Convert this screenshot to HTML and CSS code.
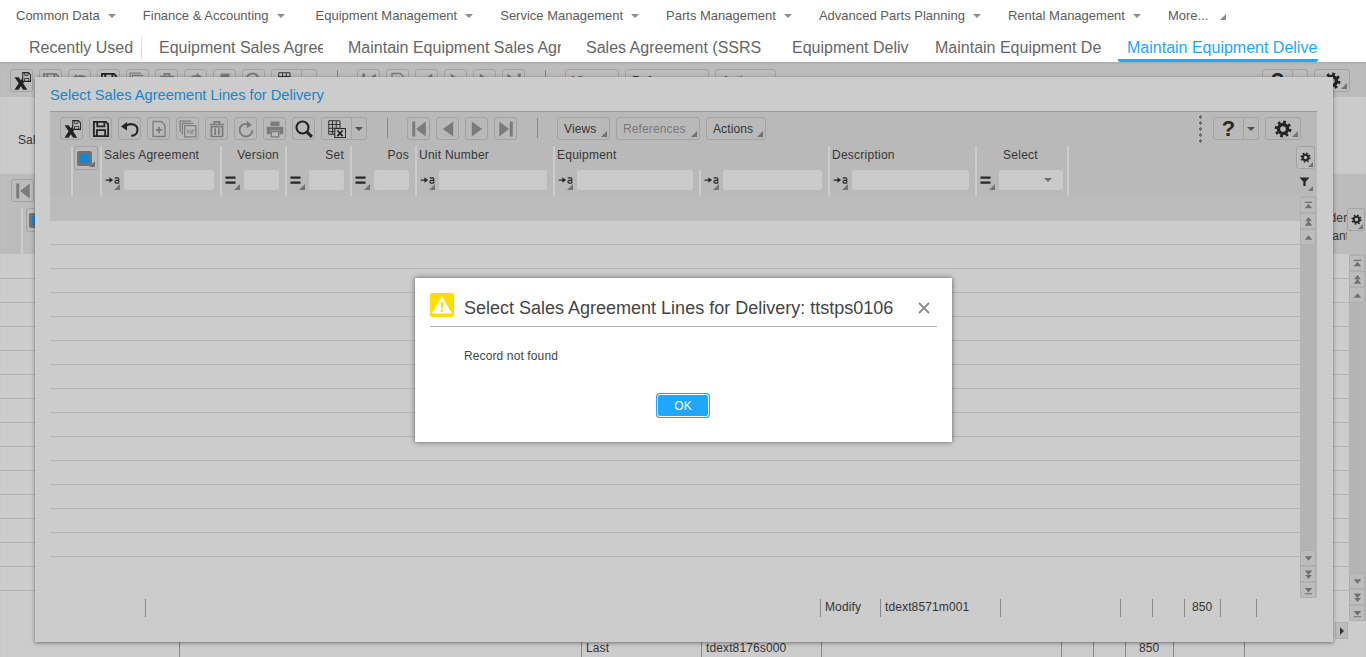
FILE: index.html
```html
<!DOCTYPE html>
<html lang="en">
<head>
    <meta charset="UTF-8">
    <meta name="viewport" content="width=device-width, initial-scale=1.0">
    <title>Maintain Equipment Delivery</title>
    <link rel="stylesheet" href="styles.css">
</head>
<body>
    <!-- Icon set -->
    <svg class="icon-defs" xmlns="http://www.w3.org/2000/svg">
        <symbol id="i-close" viewBox="0 0 24 24">
            <path d="M2 7h5.500l3 4 3-4H19l-5.500 8 5.500 8.500h-5.500l-3-4.500-3 4.500H2l5.500-8.500z" fill="currentColor"/>
            <path d="M13 .800h7.500l3 3V12.500H13z" fill="#ebebeb" stroke="currentColor" stroke-width="1.400"/>
            <path d="M15.500 1v3.500h4.500V1M15.500 12.500V8.500h5.500v4" fill="none" stroke="currentColor" stroke-width="1.100"/>
        </symbol>
        <symbol id="i-save" viewBox="0 0 24 24">
            <path d="M2.500 2.500h16l3 3v16h-19z" fill="none" stroke="currentColor" stroke-width="2.400"/>
            <path d="M7 2.500v6h9.500v-6M6.500 21.500v-8h11v8" fill="none" stroke="currentColor" stroke-width="2.400"/>
        </symbol>
        <symbol id="i-undo" viewBox="0 0 24 24">
            <path d="M7 7.500c6-4 15-1.500 15 5.500 0 5-4 8-8.500 8" fill="none" stroke="currentColor" stroke-width="2.800"/>
            <path d="M0 8.500l8-6v11.500z" fill="currentColor"/>
        </symbol>
        <symbol id="i-new" viewBox="0 0 24 24">
            <path d="M4 2h11l5 5v15H4z" fill="none" stroke="currentColor" stroke-width="1.800"/>
            <path d="M12 9v8.500M7.800 13.200h8.500" fill="none" stroke="currentColor" stroke-width="2.400"/>
        </symbol>
        <symbol id="i-copy" viewBox="0 0 24 24">
            <path d="M1.500 16V1.500H16" fill="none" stroke="currentColor" stroke-width="1.600"/>
            <path d="M4.500 19V4.500H19" fill="none" stroke="currentColor" stroke-width="1.600"/>
            <rect x="7.500" y="7.500" width="15" height="15" fill="none" stroke="currentColor" stroke-width="1.600"/>
            <path d="M10.500 13l3.500 5M14 13l-3.500 5M15.500 13.500h3.500v2h-3.500v2.500h4" fill="none" stroke="currentColor" stroke-width="1"/>
        </symbol>
        <symbol id="i-trash" viewBox="0 0 24 24">
            <path d="M2.500 6h19M8.500 6V2.500h7V6" fill="none" stroke="currentColor" stroke-width="2.200"/>
            <path d="M4.500 9h15v13h-15z" fill="none" stroke="currentColor" stroke-width="2.200"/>
            <path d="M9.500 11v9M14.500 11v9" fill="none" stroke="currentColor" stroke-width="2.200"/>
        </symbol>
        <symbol id="i-redo" viewBox="0 0 24 24">
            <path d="M16.500 6.500C11 3 3.500 7 3.500 13c0 5 4 9 8.500 9s8.500-4 8.500-8.500" fill="none" stroke="currentColor" stroke-width="2.400"/>
            <path d="M13 1l7 5.500-7 4.500z" fill="currentColor"/>
        </symbol>
        <symbol id="i-print" viewBox="0 0 24 24">
            <path d="M6 2h12v6H6z" fill="currentColor"/>
            <path d="M1 9h22v10h-5v-5H6v5H1z" fill="currentColor"/>
            <path d="M7 15.500h10V22.500H7z" fill="none" stroke="currentColor" stroke-width="1.800"/>
        </symbol>
        <symbol id="i-search" viewBox="0 0 24 24">
            <circle cx="10" cy="10" r="8" fill="none" stroke="currentColor" stroke-width="2.800"/>
            <path d="M15.500 15.500l7 7" fill="none" stroke="currentColor" stroke-width="3.800"/>
        </symbol>
        <symbol id="i-grid" viewBox="0 0 24 24">
            <path d="M1 1h15v18H1zM1 6h15M1 11h15M1 15.500h15M6 1v18M11 1v18" fill="none" stroke="currentColor" stroke-width="1.200"/>
            <rect x="9" y="11.500" width="14.500" height="12" fill="#ebebeb" stroke="currentColor" stroke-width="1.400"/>
            <path d="M12.500 14l7 7.500M19.500 14l-7 7.500" fill="none" stroke="currentColor" stroke-width="2.400"/>
        </symbol>
        <symbol id="i-first" viewBox="0 0 24 24"><path d="M3 2h4v20H3zM21 2v20L8 12z" fill="currentColor"/></symbol>
        <symbol id="i-prev" viewBox="0 0 24 24"><path d="M19 2v20L5 12z" fill="currentColor"/></symbol>
        <symbol id="i-next" viewBox="0 0 24 24"><path d="M5 2v20l14-10z" fill="currentColor"/></symbol>
        <symbol id="i-last" viewBox="0 0 24 24"><path d="M17 2h4v20h-4zM3 2v20l13-10z" fill="currentColor"/></symbol>
        <symbol id="i-gear" viewBox="0 0 24 24">
            <circle cx="12" cy="12" r="6" fill="none" stroke="currentColor" stroke-width="4.500"/>
            <circle cx="12" cy="12" r="9.500" fill="none" stroke="currentColor" stroke-width="3.500" stroke-dasharray="3.700 3.760"/>
        </symbol>
        <symbol id="i-filter" viewBox="0 0 24 24"><path d="M1 3h22l-8.500 9.500V22h-5v-9.500z" fill="currentColor"/></symbol>
        <symbol id="i-equal" viewBox="0 0 24 24"><path d="M1 3h22v5H1zM1 14h22v5H1z" fill="currentColor"/></symbol>
        <symbol id="i-starts" viewBox="0 0 24 16">
            <path d="M1 7h6V3.500L13 8l-6 4.500V9H1z" fill="currentColor"/>
            <path d="M15.500 4.500h5.500l1 1.500v7M21.500 8.500h-4l-1.500 1.500v1.500l1.500 1.500h4.500" fill="none" stroke="currentColor" stroke-width="1.800"/>
        </symbol>
        <symbol id="i-top" viewBox="0 0 12 12"><path d="M1 1h10v1.500H1zM6 3.500l5 6H1z" fill="currentColor"/></symbol>
        <symbol id="i-pageup" viewBox="0 0 12 12"><path d="M6 0l4.500 5.500h-9zM6 5l5 6.500H1z" fill="currentColor"/></symbol>
        <symbol id="i-up" viewBox="0 0 12 12"><path d="M6 3l5 6H1z" fill="currentColor"/></symbol>
        <symbol id="i-down" viewBox="0 0 12 12"><path d="M6 9L1 3h10z" fill="currentColor"/></symbol>
        <symbol id="i-pagedown" viewBox="0 0 12 12"><path d="M6 12L1.500 6.500h9zM6 7L1 .500h10z" fill="currentColor"/></symbol>
        <symbol id="i-bottom" viewBox="0 0 12 12"><path d="M1 9.500h10V11H1zM6 8.500l-5-6h10z" fill="currentColor"/></symbol>
    </svg>

    <!-- Top navigation -->
    <header class="top">
        <nav class="menu">
            <span class="menu-item">Common Data<i class="caret"></i></span>
            <span class="menu-item menu-finance">Finance &amp; Accounting<i class="caret"></i></span>
            <span class="menu-item">Equipment Management<i class="caret"></i></span>
            <span class="menu-item">Service Management<i class="caret"></i></span>
            <span class="menu-item">Parts Management<i class="caret"></i></span>
            <span class="menu-item">Advanced Parts Planning<i class="caret"></i></span>
            <span class="menu-item">Rental Management<i class="caret"></i></span>
            <span class="menu-item">More...<i class="more-corner"></i></span>
        </nav>
        <div class="tabs">
            <div class="tab tab-recent">Recently Used</div>
            <div class="tab tab-w1">Equipment Sales Agree</div>
            <div class="tab tab-w2">Maintain Equipment Sales Agr</div>
            <div class="tab tab-w3">Sales Agreement (SSRS</div>
            <div class="tab tab-w4">Equipment Deliv</div>
            <div class="tab tab-w5">Maintain Equipment De</div>
            <div class="tab tab-active">Maintain Equipment Delive</div>
        </div>
    </header>

    <!-- Session behind the dialog -->
    <main class="session">
        <div class="toolbar session-toolbar">
            <button class="tb"><svg><use href="#i-close"/></svg></button>
            <button class="tb tb-off"><svg><use href="#i-save"/></svg></button>
            <button class="tb tb-off"><svg><use href="#i-undo"/></svg></button>
            <button class="tb"><svg><use href="#i-save"/></svg></button>
            <button class="tb tb-off"><svg><use href="#i-copy"/></svg></button>
            <button class="tb tb-off"><svg><use href="#i-trash"/></svg></button>
            <button class="tb tb-off"><svg><use href="#i-redo"/></svg></button>
            <button class="tb tb-off"><svg><use href="#i-print"/></svg></button>
            <button class="tb tb-off"><svg><use href="#i-search"/></svg></button>
            <div class="tb-combo"><button class="tb"><svg><use href="#i-grid"/></svg></button><button class="tb tb-drop"><i class="caret"></i></button></div>
            <span class="tb-sep"></span>
            <button class="tb tb-off"><svg><use href="#i-first"/></svg></button>
            <button class="tb tb-off"><svg><use href="#i-new"/></svg></button>
            <button class="tb tb-off"><svg><use href="#i-prev"/></svg></button>
            <button class="tb tb-off"><svg><use href="#i-next"/></svg></button>
            <button class="tb tb-off"><svg><use href="#i-next"/></svg></button>
            <button class="tb tb-off"><svg><use href="#i-last"/></svg></button>
            <span class="tb-sep"></span>
            <button class="tb-text session-views">Views</button>
            <button class="tb-text session-refs">References</button>
            <button class="tb-text">Actions</button>
            <div class="tb-right">
                <div class="tb-combo"><button class="tb tb-help">?</button><button class="tb tb-drop"><i class="caret"></i></button></div>
                <button class="tb tb-gear corner"><svg><use href="#i-gear"/></svg></button>
            </div>
        </div>
        <div class="session-form">Sales Agreement</div>
        <div class="session-band">
            <button class="tb tb-off"><svg><use href="#i-first"/></svg></button>
            <div class="session-head">
                <button class="check-btn corner"><i class="check-box"></i></button>
                <div class="head-cut">Order<br>Quantity</div>
                <button class="small-btn corner"><svg><use href="#i-gear"/></svg></button>
            </div>
        </div>
        <div class="session-body">
            <div class="session-rows"></div>
            <div class="scroll session-scroll">
                <button class="scroll-btn"><svg><use href="#i-top"/></svg></button>
                <button class="scroll-btn"><svg><use href="#i-pageup"/></svg></button>
                <button class="scroll-btn"><svg><use href="#i-up"/></svg></button>
                <span class="scroll-fill"></span>
                <button class="scroll-btn"><svg><use href="#i-down"/></svg></button>
                <button class="scroll-btn"><svg><use href="#i-pagedown"/></svg></button>
                <button class="scroll-btn"><svg><use href="#i-bottom"/></svg></button>
            </div>
        </div>
        <div class="session-hscroll"><button class="hscroll-btn"><i class="hscroll-arrow"></i></button></div>
        <div class="session-last">
            <span class="cell-a"></span><span class="cell-b">Last</span><span class="cell-b">tdext8176s000</span><span class="cell-c"></span><span class="cell-d"></span><span class="cell-d"></span><span class="cell-e">850</span><span class="cell-f"></span>
        </div>
    </main>

    <!-- Lookup window -->
    <section class="window">
        <h2 class="window-title">Select Sales Agreement Lines for Delivery</h2>
        <div class="panel">
            <div class="toolbar">
                <button class="tb"><svg><use href="#i-close"/></svg></button>
                <button class="tb"><svg><use href="#i-save"/></svg></button>
                <button class="tb"><svg><use href="#i-undo"/></svg></button>
                <button class="tb tb-off"><svg><use href="#i-new"/></svg></button>
                <button class="tb tb-off"><svg><use href="#i-copy"/></svg></button>
                <button class="tb tb-off"><svg><use href="#i-trash"/></svg></button>
                <button class="tb tb-off"><svg><use href="#i-redo"/></svg></button>
                <button class="tb tb-off"><svg><use href="#i-print"/></svg></button>
                <button class="tb"><svg><use href="#i-search"/></svg></button>
                <div class="tb-combo"><button class="tb"><svg><use href="#i-grid"/></svg></button><button class="tb tb-drop"><i class="caret"></i></button></div>
                <span class="tb-sep"></span>
                <button class="tb tb-off"><svg><use href="#i-first"/></svg></button>
                <button class="tb tb-off"><svg><use href="#i-prev"/></svg></button>
                <button class="tb tb-off"><svg><use href="#i-next"/></svg></button>
                <button class="tb tb-off"><svg><use href="#i-last"/></svg></button>
                <span class="tb-sep"></span>
                <button class="tb-text corner btn-views">Views</button>
                <button class="tb-text corner btn-refs">References</button>
                <button class="tb-text corner btn-actions">Actions</button>
                <div class="tb-right">
                    <span class="tb-dots"></span>
                    <div class="tb-combo"><button class="tb tb-help">?</button><button class="tb tb-drop"><i class="caret"></i></button></div>
                    <button class="tb tb-gear corner"><svg><use href="#i-gear"/></svg></button>
                </div>
            </div>
            <div class="filters">
                <div class="col col-check"><button class="check-btn corner"><i class="check-box"></i></button></div>
                <div class="col col-agreement">
                    <div class="col-label">Sales Agreement</div>
                    <div class="col-filter"><span class="op corner"><svg class="op-starts"><use href="#i-starts"/></svg></span><span class="field"></span></div>
                </div>
                <div class="col col-num">
                    <div class="col-label label-right">Version</div>
                    <div class="col-filter"><span class="op corner"><svg class="op-equal"><use href="#i-equal"/></svg></span><span class="field"></span></div>
                </div>
                <div class="col col-num">
                    <div class="col-label label-right">Set</div>
                    <div class="col-filter"><span class="op corner"><svg class="op-equal"><use href="#i-equal"/></svg></span><span class="field"></span></div>
                </div>
                <div class="col col-num">
                    <div class="col-label label-right">Pos</div>
                    <div class="col-filter"><span class="op corner"><svg class="op-equal"><use href="#i-equal"/></svg></span><span class="field"></span></div>
                </div>
                <div class="col col-unit">
                    <div class="col-label">Unit Number</div>
                    <div class="col-filter"><span class="op corner"><svg class="op-starts"><use href="#i-starts"/></svg></span><span class="field"></span></div>
                </div>
                <div class="col col-equip">
                    <div class="col-label">Equipment</div>
                    <div class="col-filter"><span class="op corner"><svg class="op-starts"><use href="#i-starts"/></svg></span><span class="field"></span></div>
                </div>
                <div class="col col-sub">
                    <div class="col-label"></div>
                    <div class="col-filter"><span class="op corner"><svg class="op-starts"><use href="#i-starts"/></svg></span><span class="field"></span></div>
                </div>
                <div class="col col-desc">
                    <div class="col-label">Description</div>
                    <div class="col-filter"><span class="op corner"><svg class="op-starts"><use href="#i-starts"/></svg></span><span class="field"></span></div>
                </div>
                <div class="col col-select">
                    <div class="col-label label-center">Select</div>
                    <div class="col-filter"><span class="op corner"><svg class="op-equal"><use href="#i-equal"/></svg></span><span class="field field-select"><i class="caret"></i></span></div>
                </div>
                <div class="filter-tools">
                    <button class="small-btn corner"><svg><use href="#i-gear"/></svg></button>
                    <span class="funnel corner"><svg><use href="#i-filter"/></svg></span>
                </div>
            </div>
        </div>
        <div class="grid">
            <div class="grid-main">
                <div class="grid-band"></div>
                <div class="grid-rows"></div>
            </div>
            <div class="scroll">
                <button class="scroll-btn"><svg><use href="#i-top"/></svg></button>
                <button class="scroll-btn"><svg><use href="#i-pageup"/></svg></button>
                <button class="scroll-btn"><svg><use href="#i-up"/></svg></button>
                <span class="scroll-fill"></span>
                <button class="scroll-btn"><svg><use href="#i-down"/></svg></button>
                <button class="scroll-btn"><svg><use href="#i-pagedown"/></svg></button>
                <button class="scroll-btn"><svg><use href="#i-bottom"/></svg></button>
            </div>
        </div>
        <div class="status">
            <span class="st-a"></span><span class="st-b">Modify</span><span class="st-c">tdext8571m001</span><span class="st-c"></span><span class="st-d"></span><span class="st-d"></span><span class="st-e">850</span><span class="st-e"></span><span class="st-f"></span>
        </div>
    </section>

    <div class="overlay"></div>

    <!-- Message dialog -->
    <div class="dialog">
        <div class="dialog-head">
            <svg class="warn" viewBox="0 0 24 24">
                <rect width="24" height="24" rx="2" fill="#ffdd00"/>
                <path d="M12 3.500L22 20.500H2z" fill="#fff"/>
                <path d="M10.800 9h2.400l-.4 6.500h-1.600zM10.800 16.500h2.400v2.200h-2.400z" fill="#ffdd00"/>
            </svg>
            <h3 class="dialog-title">Select Sales Agreement Lines for Delivery: ttstps0106</h3>
            <svg class="dialog-close" viewBox="0 0 12 12"><path d="M1 1l10 10M11 1L1 11" fill="none" stroke="#8a8a8a" stroke-width="1.800"/></svg>
        </div>
        <p class="dialog-text">Record not found</p>
        <div class="dialog-actions"><button class="ok-btn">OK</button></div>
    </div>
</body>
</html>
```

FILE: styles.css
```css
/* General Styles */
html, body {
    margin: 0;
    padding: 0;
    height: 657px;
    overflow: hidden;
}
body {
    position: relative;
    font-family: "Liberation Sans", Arial, sans-serif;
    font-size: 12px;
    letter-spacing: 0.120px;
    color: #444;
    background: #fff;
}
button {
    font-family: inherit;
    letter-spacing: inherit;
    padding: 0;
    margin: 0;
}
.icon-defs {
    position: absolute;
    width: 0;
    height: 0;
}

/* Top Navigation */
.top {
    height: 62px;
    background: #fff;
    letter-spacing: 0;
}
.menu {
    display: flex;
    height: 31px;
    align-items: center;
    padding-left: 16px;
    font-size: 13px;
    color: #5c5c5c;
}
.menu-item {
    display: flex;
    align-items: center;
    margin-right: 27px;
    white-space: nowrap;
}
.menu-finance {
    margin-right: 31px;
}
.caret {
    display: inline-block;
    width: 0;
    height: 0;
    margin-left: 8px;
    border-left: 4px solid transparent;
    border-right: 4px solid transparent;
    border-top: 4px solid #8c8c8c;
}
.more-corner {
    display: inline-block;
    width: 0;
    height: 0;
    margin-left: 12px;
    margin-top: 3px;
    border-left: 6px solid transparent;
    border-bottom: 6px solid #8c8c8c;
}
.tabs {
    display: flex;
    height: 31px;
    padding-left: 29px;
    font-size: 16px;
    color: #666;
}
.tab {
    height: 28px;
    line-height: 33px;
    margin-left: 25px;
    overflow: hidden;
    white-space: nowrap;
}
.tab-recent {
    width: 112px;
    height: 22px;
    line-height: 21px;
    margin: 6px 0 0 0;
    border-right: 1px solid #ddd;
}
.tabs .tab-w1 { width: 164px; margin-left: 17px; }
.tab-w2 { width: 213px; }
.tab-w3 { width: 181px; }
.tab-w4 { width: 118px; }
.tab-w5 { width: 166px; }
.tabs .tab-active {
    width: 200px;
    height: 31px;
    margin-left: 17px;
    padding-left: 9px;
    box-sizing: border-box;
    color: #1ea7fd;
    border-bottom: 3px solid #1ea7fd;
    border-radius: 0 0 2px 2px;
}

/* Toolbars */
.toolbar {
    display: flex;
    height: 23px;
    padding: 5px 16px 6px 10px;
    align-items: flex-start;
    gap: 6px;
}
.tb {
    width: 23px;
    height: 23px;
    flex: none;
    color: #2c2c2c;
    background: #ebebeb;
    border: 1px solid #ccc;
    border-radius: 3px;
    display: flex;
    align-items: center;
    justify-content: center;
}
.tb svg {
    width: 18px;
    height: 18px;
}
.tb-off {
    color: #9a9a9a;
}
.tb-combo {
    display: flex;
    flex: none;
}
.tb-combo .tb:first-child {
    width: 31px;
    border-radius: 3px 0 0 3px;
}
.tb-combo .tb-drop {
    width: 15px;
    border-left: 0;
    border-radius: 0 3px 3px 0;
}
.tb-drop .caret {
    margin: 0;
    border-top-color: #666;
}
.tb-sep {
    width: 1px;
    height: 20px;
    flex: none;
    margin: 1px 13px 0 14px;
    background: #aaa;
}
.tb-text {
    position: relative;
    height: 23px;
    flex: none;
    padding: 0 13px 0 6px;
    font-size: 12px;
    color: #444;
    background: #ebebeb;
    border: 1px solid #ccc;
    border-radius: 3px;
    text-align: left;
}
.btn-views { width: 53px; }
.btn-refs { width: 84px; color: #999; }
.btn-actions { width: 60px; }
.session-views { width: 54px; }
.session-refs { width: 84px; }
.tb-right {
    display: flex;
    margin-left: auto;
    gap: 6px;
    align-items: flex-start;
}
.tb-help {
    font-size: 22px;
    font-weight: bold;
    color: #333;
    line-height: 1;
}
.tb-right .tb-gear {
    width: 36px;
}
.tb-dots {
    width: 3px;
    height: 30px;
    margin: -3px 5px 0 0;
    background: radial-gradient(circle, #888 1.500px, transparent 1.700px) 0 0 / 3px 6px repeat-y;
}

/* Small triangle in the corner of a control */
.corner {
    position: relative;
}
.corner::after {
    content: "";
    position: absolute;
    right: 2px;
    bottom: 2px;
    width: 0;
    height: 0;
    border-left: 6px solid transparent;
    border-bottom: 6px solid #8f8f8f;
}

/* Session behind the dialog */
.session-toolbar {
    height: 23px;
    padding: 7px 16px 5px 10px;
    background: #ebebeb;
}
.session-form {
    height: 77px;
    line-height: 86px;
    padding-left: 18px;
    box-sizing: border-box;
    background: #fdfdfd;
}
.session-band {
    height: 80px;
    padding: 5px 0 0 11px;
    box-sizing: border-box;
    background: #ebebeb;
}
.session-head {
    display: flex;
    align-items: flex-start;
    margin: 6px 0 0 10px;
    padding-left: 2px;
    border-left: 2px solid #fff;
    height: 46px;
}
.session-head .check-btn {
    margin-left: 1px;
}
.head-cut {
    width: 31px;
    height: 46px;
    margin-left: auto;
    padding-top: 1px;
    overflow: hidden;
    box-sizing: border-box;
    line-height: 18px;
    white-space: nowrap;
}
.session-head .small-btn {
    width: 18px;
    margin-right: 1px;
}
.session-body {
    display: flex;
    height: 367px;
}
.session-rows {
    flex: 1;
    height: 337px;
    margin-top: 1px;
    background: repeating-linear-gradient(#fff 0, #fff 23px, #e2e2e2 23px, #e2e2e2 24px);
}
.session-hscroll {
    display: flex;
    justify-content: flex-end;
    height: 19px;
    padding-right: 18px;
}
.hscroll-btn {
    width: 13px;
    height: 17px;
    margin-top: 1px;
    background: #ebebeb;
    border: 1px solid #ddd;
}
.hscroll-arrow {
    display: block;
    width: 0;
    height: 0;
    margin-left: 4px;
    border-top: 4px solid transparent;
    border-bottom: 4px solid transparent;
    border-left: 4px solid #444;
}
.session-last {
    display: flex;
    height: 17px;
    line-height: 16px;
    margin-left: 179px;
}
.session-last span {
    display: block;
    flex: none;
    box-sizing: border-box;
    border-left: 1px solid #aaa;
    padding-left: 4px;
}
.cell-a { width: 402px; }
.cell-b { width: 120px; }
.cell-c { width: 240px; }
.cell-d { width: 32px; }
.session-last .cell-e { width: 48px; padding-left: 13px; }
.cell-f { width: 72px; border-right: 1px solid #aaa; }

/* Lookup window */
.window {
    position: absolute;
    left: 35px;
    top: 77px;
    z-index: 10;
    width: 1298px;
    height: 565px;
    padding: 0 16px 0 15px;
    box-sizing: border-box;
    background: #fff;
    box-shadow: 0 1px 4px rgba(0, 0, 0, 0.45);
}
.window-title {
    height: 34px;
    margin: 0;
    font-size: 14.670px;
    font-weight: normal;
    letter-spacing: 0;
    line-height: 36px;
    color: #1ea7fd;
}
.panel {
    height: 84px;
    border-top: 1px solid #c0c0c0;
    background: #e8e8e8;
}
.panel .tb,
.panel .tb-text {
    background: #e8e8e8;
}
.filters {
    display: flex;
    height: 50px;
    padding-left: 21px;
}
.col {
    flex: none;
    box-sizing: border-box;
    border-left: 2px solid #fff;
}
.col-check { width: 29px; padding: 0 0 0 1px; }
.col-agreement { width: 120px; }
.col-num { width: 65px; }
.col-unit { width: 138px; }
.col-equip { width: 146px; }
.col-sub { width: 129px; border-left: 0; }
.col-desc { width: 147px; }
.col-select { width: 94px; border-right: 2px solid #fff; }
.col-label {
    height: 24px;
    line-height: 18px;
    padding: 0 4px 0 2px;
    white-space: nowrap;
    letter-spacing: 0.250px;
}
.label-right { text-align: right; padding-right: 6px; }
.label-center { text-align: center; padding-right: 5px; }
.col-filter {
    display: flex;
    height: 26px;
    box-sizing: border-box;
    padding-right: 6px;
}
.col-select .col-filter {
    padding-right: 4px;
}
.col-sub .col-filter {
    border-left: 2px solid #fff;
}
.op {
    display: flex;
    flex: none;
    width: 22px;
    height: 20px;
    padding-left: 3px;
    box-sizing: border-box;
    align-items: center;
    color: #333;
}
.op::after {
    right: 4px;
    bottom: 0;
}
.op-starts {
    width: 15px;
    height: 10px;
}
.op-equal {
    width: 11px;
    height: 11px;
}
.field {
    display: flex;
    flex: 1;
    height: 20px;
    align-items: center;
    justify-content: flex-end;
    background: #fdfdfd;
    border-radius: 3px;
}
.field-select .caret {
    margin: 0 11px 0 0;
}
.check-btn {
    display: flex;
    width: 24px;
    height: 24px;
    align-items: center;
    padding: 0 0 0 2px;
    background: #ececec;
    border: 1px solid #ccc;
    border-radius: 3px;
}
.check-box {
    display: block;
    width: 9px;
    height: 9px;
    background: #1ea7fd;
    border: 3px solid #8f8f8f;
    border-radius: 2px;
}
.filter-tools {
    display: flex;
    flex-direction: column;
    align-items: flex-start;
    margin-left: auto;
    margin-right: 2px;
}
.small-btn {
    display: flex;
    width: 19px;
    height: 23px;
    align-items: center;
    justify-content: center;
    color: #333;
    background: #ebebeb;
    border: 1px solid #ccc;
    border-radius: 3px;
}
.small-btn svg {
    width: 11px;
    height: 11px;
}
.small-btn::after {
    right: 1px;
    bottom: 1px;
    border-left-width: 5px;
    border-bottom-width: 5px;
}
.funnel {
    display: block;
    width: 18px;
    height: 16px;
    margin-top: 7px;
    color: #333;
}
.funnel svg {
    display: block;
    width: 11px;
    height: 11px;
    margin-left: 3px;
}
.funnel::after {
    right: 1px;
    bottom: 1px;
    border-left-width: 5px;
    border-bottom-width: 5px;
}

/* Empty result grid */
.grid {
    display: flex;
    height: 402px;
}
.grid-main {
    flex: 1;
}
.grid-band {
    height: 25px;
    background: #ececec;
}
.grid-rows {
    height: 336px;
    background: repeating-linear-gradient(#fff 0, #fff 23px, #e2e2e2 23px, #e2e2e2 24px);
}
.scroll {
    display: flex;
    flex-direction: column;
    flex: none;
    width: 17px;
    padding-top: 1px;
    box-sizing: border-box;
    background: #e2e2e2;
}
.session-scroll {
    height: 367px;
}
.scroll-btn {
    display: flex;
    width: 16px;
    height: 16px;
    flex: none;
    align-items: center;
    justify-content: center;
    color: #8c8c8c;
    background: #ececec;
    border: 1px solid #ddd;
}
.scroll-btn svg {
    width: 9px;
    height: 9px;
}
.scroll-fill {
    flex: 1;
}

/* Status bar */
.status {
    display: flex;
    height: 18px;
    margin: 1px 0 0 95px;
    line-height: 17px;
}
.status span {
    display: block;
    flex: none;
    box-sizing: border-box;
    border-left: 1px solid #aaa;
    padding-left: 4px;
}
.st-a { width: 675px; }
.st-b { width: 60px; }
.st-c { width: 120px; }
.st-d { width: 32px; }
.status .st-e { width: 36px; padding-left: 7px; }
.st-f { width: 1px; }

/* Overlay */
.overlay {
    position: absolute;
    left: 0;
    right: 0;
    top: 62px;
    bottom: 0;
    z-index: 20;
    background: rgba(0, 0, 0, 0.2);
    box-shadow: inset 0 2px 2px rgba(0, 0, 0, 0.06);
}

/* Message dialog */
.dialog {
    position: absolute;
    left: 415px;
    top: 278px;
    z-index: 30;
    width: 537px;
    height: 164px;
    padding: 15px 15px 0;
    box-sizing: border-box;
    background: #fff;
    box-shadow: 0 0 5px rgba(0, 0, 0, 0.55);
}
.dialog-head {
    display: flex;
    height: 33px;
    align-items: flex-start;
    border-bottom: 1px solid #b0b0b0;
}
.warn {
    width: 24px;
    height: 24px;
    flex: none;
}
.dialog-title {
    margin: 0 0 0 10px;
    font-size: 18px;
    font-weight: normal;
    letter-spacing: 0;
    line-height: 31px;
    color: #444;
    white-space: nowrap;
}
.dialog-close {
    width: 12px;
    height: 12px;
    flex: none;
    margin: 9px 0 0 auto;
    margin-right: 7px;
}
.dialog-text {
    margin: 22px 0 0 34px;
    line-height: 14px;
    color: #444;
}
.dialog-actions {
    display: flex;
    justify-content: center;
    margin-top: 31px;
    padding-right: 1px;
}
.ok-btn {
    width: 52px;
    height: 23px;
    font-size: 12px;
    color: #fff;
    background: #1ea7fd;
    border: 1px solid #fff;
    border-radius: 3px;
    box-shadow: 0 0 0 1px #1ea7fd;
}
```
